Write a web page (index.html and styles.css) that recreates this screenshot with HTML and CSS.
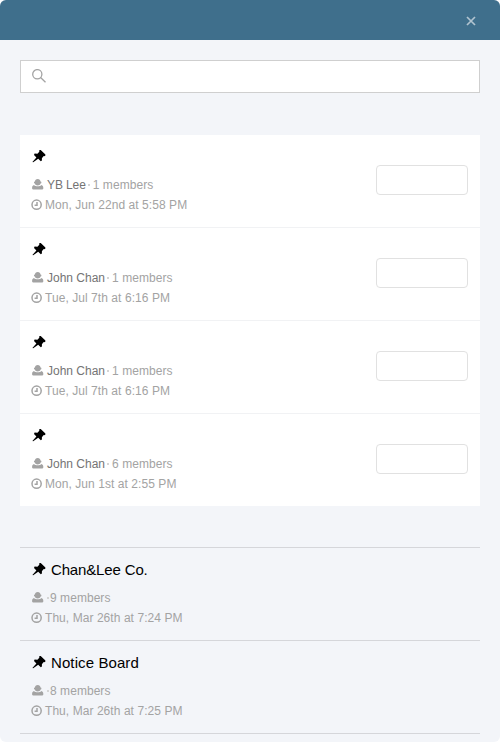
FILE: index.html
```
<!DOCTYPE html>
<html lang="en">
<head>
<meta charset="utf-8">
<title>Boards</title>
<link rel="stylesheet" href="styles.css">
</head>
<body>
<svg class="defs" aria-hidden="true">
  <symbol id="pin" viewBox="0 0 14 13"><path d="M7.2 .2 8.6 -.1 13.4 4.4 13.2 6 11.4 6.3 9.9 8.3 9.9 10.6 8.8 11.2 6.2 8.8 1.2 12.2 .4 12 4.4 7.5 2 5 2.6 3.6 5.4 3.7 7.3 1.8Z"/></symbol>
  <symbol id="user" viewBox="0 0 12 12"><path d="M5.7 0C7.4 0 8.4 .9 8.5 2.5 9.8 2.7 9.7 4.2 8.6 4.6 8 6 7.1 6.5 5.7 6.5S3.4 6 2.8 4.6C1.7 4.2 1.6 2.7 2.9 2.5 3 .9 4 0 5.7 0ZM2 5.9C3 7 4.2 7.3 5.7 7.3S8.4 7 9.4 5.9C10.6 6.3 11.3 7.3 11.3 8.7V9.6Q11.3 10.4 10.4 10.4H1Q.1 10.4 .1 9.6V8.7C.1 7.3 .8 6.3 2 5.9Z"/></symbol>
  <symbol id="clock" viewBox="0 0 12 12"><path d="M5.6 1.1A4.6 4.6 0 1 1 5.6 10.3 4.6 4.6 0 1 1 5.6 1.1M6 3V6.2H3.6" fill="none" stroke="#a3a3a3" stroke-width="1.5"/></symbol>
</svg>
<main class="dialog">
  <header class="bar">
    <svg class="close" viewBox="0 0 10 10"><path d="M1 1 9 9M9 1 1 9"/></svg>
  </header>
  <div class="content">
    <div class="search">
      <svg class="lens" viewBox="0 0 14 14"><circle cx="5.3" cy="5.2" r="4.6"/><path d="M8.6 8.5 13.5 13.3"/></svg>
    </div>
    <ul class="list invites">
      <li class="row">
        <div class="info">
          <div class="title"><svg class="pin"><use href="#pin"/></svg></div>
          <div class="meta"><svg class="icon"><use href="#user"/></svg><span class="name short">YB Lee</span><i class="dot"></i><span class="count">1 members</span></div>
          <div class="meta"><svg class="icon clock"><use href="#clock"/></svg><span class="time">Mon, Jun 22nd at 5:58 PM</span></div>
        </div>
        <button class="action" type="button"></button>
      </li>
      <li class="row">
        <div class="info">
          <div class="title"><svg class="pin"><use href="#pin"/></svg></div>
          <div class="meta"><svg class="icon"><use href="#user"/></svg><span class="name">John Chan</span><i class="dot"></i><span class="count">1 members</span></div>
          <div class="meta"><svg class="icon clock"><use href="#clock"/></svg><span class="time">Tue, Jul 7th at 6:16 PM</span></div>
        </div>
        <button class="action" type="button"></button>
      </li>
      <li class="row">
        <div class="info">
          <div class="title"><svg class="pin"><use href="#pin"/></svg></div>
          <div class="meta"><svg class="icon"><use href="#user"/></svg><span class="name">John Chan</span><i class="dot"></i><span class="count">1 members</span></div>
          <div class="meta"><svg class="icon clock"><use href="#clock"/></svg><span class="time">Tue, Jul 7th at 6:16 PM</span></div>
        </div>
        <button class="action" type="button"></button>
      </li>
      <li class="row">
        <div class="info">
          <div class="title"><svg class="pin"><use href="#pin"/></svg></div>
          <div class="meta"><svg class="icon"><use href="#user"/></svg><span class="name">John Chan</span><i class="dot"></i><span class="count">6 members</span></div>
          <div class="meta"><svg class="icon clock"><use href="#clock"/></svg><span class="time">Mon, Jun 1st at 2:55 PM</span></div>
        </div>
        <button class="action" type="button"></button>
      </li>
    </ul>
    <ul class="list joined">
      <li class="row">
        <div class="info">
          <div class="title"><svg class="pin"><use href="#pin"/></svg><span class="company">Chan&amp;Lee Co.</span></div>
          <div class="meta"><svg class="icon"><use href="#user"/></svg><i class="dot"></i><span class="count">9 members</span></div>
          <div class="meta"><svg class="icon clock"><use href="#clock"/></svg><span class="time">Thu, Mar 26th at 7:24 PM</span></div>
        </div>
      </li>
      <li class="row">
        <div class="info">
          <div class="title"><svg class="pin"><use href="#pin"/></svg><span class="board">Notice Board</span></div>
          <div class="meta"><svg class="icon"><use href="#user"/></svg><i class="dot"></i><span class="count">8 members</span></div>
          <div class="meta"><svg class="icon clock"><use href="#clock"/></svg><span class="time">Thu, Mar 26th at 7:25 PM</span></div>
        </div>
      </li>
    </ul>
  </div>
</main>
</body>
</html>
```
FILE: styles.css
```
* { box-sizing: border-box; }
body { margin: 0; background: #fff; font-family: "Liberation Sans", Arial, sans-serif; }
.defs { display: none; }
.dialog { height: 742px; overflow: hidden; border-radius: 6px; background: #f3f5f9; }
.bar { height: 40px; background: #3f6f8c; display: flex; align-items: center; justify-content: flex-end; padding: 1px 24px 0 0; }
.close { width: 10px; height: 10px; fill: none; stroke: #b1c4d0; stroke-width: 1.7; }
.content { padding: 20px 20px 0; }
.search { height: 33px; border: 1px solid #cfcfcf; background: #fff; padding: 8px 11px; }
.lens { display: block; width: 14px; height: 14px; fill: none; stroke: #a3a3a3; stroke-width: 1.3; }
.list { list-style: none; margin: 0; padding: 0; }
.invites { margin-top: 42px; background: #fff; }
.row { height: 93px; display: flex; justify-content: space-between; align-items: flex-start; padding: 0 12px; border-bottom: 1px solid #f1f2f4; }
.invites .row:last-child { height: 92px; border-bottom: 0; }
.joined { margin-top: 41px; border-top: 1px solid #d5d6da; }
.joined .row { border-bottom-color: #d5d6da; }
.title { height: 40px; display: flex; align-items: flex-start; font-size: 15px; color: #000; white-space: nowrap; }
.title span { margin: 13px 0 0 5px; line-height: 18px; }
.company { letter-spacing: -0.15px; }
.board { letter-spacing: 0.1px; }
.pin { width: 14px; height: 13px; margin-top: 15px; fill: #000; overflow: visible; }
.joined .pin { margin-top: 15px; }
.meta { height: 20px; display: flex; align-items: center; font-size: 12px; line-height: 20px; color: #a3a3a3; white-space: nowrap; }
.icon { width: 12px; height: 12px; margin-right: 2px; fill: #a3a3a3; flex: none; }
.clock { margin-left: -1px; margin-right: 3px; }
.name { color: #747474; margin-left: 1px; }
.short { letter-spacing: -0.1px; }
.dot { width: 2px; height: 2px; margin: 0 3px 0 2px; background: #d5d5d5; }
.joined .dot { margin: 0 2px 0 1px; }
.joined .count { margin-left: -1px; }
.count { letter-spacing: 0.05px; }
.time { margin-left: -1px; letter-spacing: 0.06px; }
.action { width: 92px; height: 30px; margin-top: 30px; padding: 0; border: 1px solid #e1e1e1; border-radius: 4px; background: #fff; }
```
